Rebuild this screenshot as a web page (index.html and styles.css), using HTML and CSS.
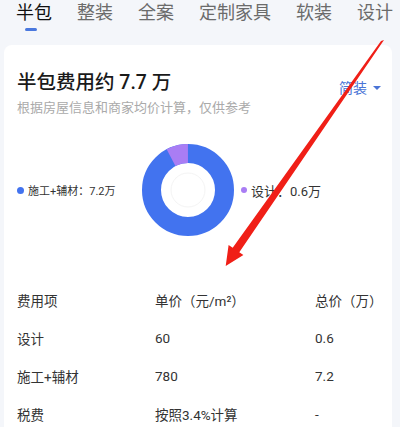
FILE: index.html
```html
<!DOCTYPE html>
<html lang="zh-CN">
<head>
<meta charset="utf-8">
<link rel="stylesheet" href="styles.css">
</head>
<body>
<div class="page">
  <nav class="tabs">
    <div class="tab active"><span>半包</span><i class="bar"></i></div>
    <div class="tab"><span>整装</span></div>
    <div class="tab"><span>全案</span></div>
    <div class="tab"><span>定制家具</span></div>
    <div class="tab"><span>软装</span></div>
    <div class="tab"><span>设计</span></div>
  </nav>
  <section class="card">
    <div class="head">
      <h1 class="title">半包费用约 7.7 万</h1>
      <div class="select">简装 <span class="caret"></span></div>
    </div>
    <p class="sub">根据房屋信息和商家均价计算，仅供参考</p>
    <div class="chart">
      <div class="legend left"><i class="dot blue"></i>施工+辅材：7.2万</div>
      <svg class="donut" width="92" height="92" viewBox="0 0 92 92">
        <circle cx="46" cy="46" r="36.5" fill="none" stroke="#4273ef" stroke-width="19"/>
        <circle cx="46" cy="46" r="36.5" fill="none" stroke="#a97df4" stroke-width="19" stroke-dasharray="17.6 229.3" transform="rotate(-117.7 46 46)"/>
        <circle cx="46" cy="46" r="17" fill="none" stroke="#f4f4f4" stroke-width="1"/>
      </svg>
      <div class="legend right"><i class="dot purple"></i>设计：0.6万</div>
    </div>
    <div class="table">
      <div class="row"><span>费用项</span><span>单价（元/m²）</span><span>总价（万）</span></div>
      <div class="row"><span>设计</span><span>60</span><span>0.6</span></div>
      <div class="row"><span>施工+辅材</span><span>780</span><span>7.2</span></div>
      <div class="row"><span>税费</span><span>按照3.4%计算</span><span>-</span></div>
    </div>
  </section>
  <svg class="arrow" width="400" height="427" viewBox="0 0 400 427">
    <polygon fill="#f01f17" points="381,41 384,40 239.3,252.3 243.4,255.1 225.7,266 228.6,244.9 232.7,247.7"/>
  </svg>
</div>
</body>
</html>
```
FILE: styles.css
```css
* { box-sizing: border-box; margin: 0; padding: 0; }
html, body { width: 400px; height: 427px; overflow: hidden; }
body {
  background: #f4f6fa;
  font-family: Roboto, "Noto Sans CJK SC", sans-serif;
  color: #333;
}
.page { position: relative; width: 400px; height: 427px; overflow: hidden; }
.tabs {
  display: flex;
  gap: 25px;
  padding-left: 16px;
  height: 45px;
}
.tab {
  display: flex;
  flex-direction: column;
  align-items: center;
  font-size: 18px;
  line-height: 26px;
  color: #6b6b6b;
  white-space: nowrap;
}
.tab.active { color: #111; }
.bar {
  display: block;
  width: 12px;
  height: 3px;
  border-radius: 2px;
  background: #4a78de;
  margin-top: 2px;
  margin-right: 6px;
}
.card {
  background: #fff;
  margin: 0 8px 0 4px;
  border-radius: 8px;
  padding: 26px 13px 0;
  height: 400px;
}
.head {
  display: flex;
  justify-content: space-between;
  align-items: flex-end;
}
.title {
  font-size: 19.5px;
  line-height: 24px;
  font-weight: 500;
  color: #1a1a1a;
}
.select {
  font-size: 14px;
  line-height: 20px;
  color: #4a74d6;
  margin-bottom: -3px;
  margin-right: -2px;
  display: flex;
  align-items: center;
  gap: 6px;
}
.caret {
  width: 0; height: 0;
  border-left: 4px solid transparent;
  border-right: 4px solid transparent;
  border-top: 4px solid #4a74d6;
}
.sub {
  margin-top: 4px;
  font-size: 13px;
  line-height: 18px;
  color: #aaa;
}
.chart {
  display: flex;
  align-items: center;
  margin-top: 27px;
}
.legend {
  display: flex;
  align-items: center;
  white-space: nowrap;
  color: #333;
}
.legend.left { width: 125px; font-size: 11px; }
.legend.right { margin-left: 7px; font-size: 13px; }
.dot {
  display: block;
  width: 6px; height: 6px;
  border-radius: 50%;
  margin-right: 4px;
}
.legend.left .dot { margin-right: 4px; width: 7px; height: 7px; }
.dot.blue { background: #4273ef; }
.dot.purple { background: #a97df4; }
.donut { display: block; flex: none; }
.table { margin-top: 45px; }
.row {
  display: grid;
  grid-template-columns: 138px 160px 1fr;
  height: 38px;
  align-items: center;
  font-size: 13.5px;
  color: #333;
}
.arrow { position: absolute; left: 0; top: 0; pointer-events: none; }
```
